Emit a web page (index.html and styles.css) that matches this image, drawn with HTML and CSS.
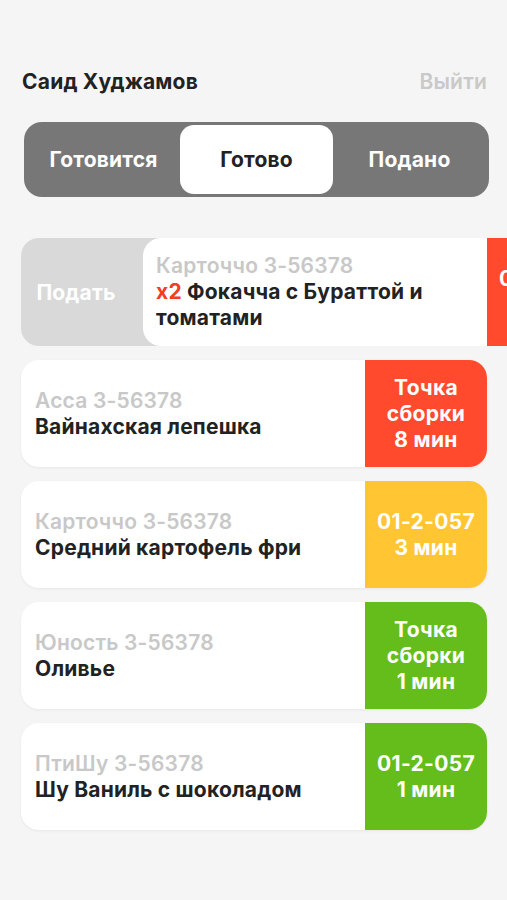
FILE: index.html
```html
<!DOCTYPE html>
<html lang="ru">
<head>
  <meta charset="UTF-8">
  <meta name="viewport" content="width=device-width, initial-scale=1.0">
  <title>Заказы</title>
  <link rel="stylesheet" href="styles.css">
</head>
<body>
  <div class="page">
    <div class="header">
      <div class="user-name">Саид Худжамов</div>
      <div class="logout">Выйти</div>
    </div>

    <div class="tabs">
      <div class="tab">Готовится</div>
      <div class="tab active">Готово</div>
      <div class="tab">Подано</div>
    </div>

    <div class="orders">
      <div class="swipe">
        <div class="swipe-action">Подать</div>
        <div class="order order-shifted">
          <div class="order-info">
            <div class="place">Карточчо 3-56378</div>
            <div class="dish"><span class="qty">x2</span> Фокачча с Бураттой и томатами</div>
          </div>
          <div class="status red">01-2-057<br>8 мин</div>
        </div>
      </div>

      <div class="order">
        <div class="order-info">
          <div class="place">Асса 3-56378</div>
          <div class="dish">Вайнахская лепешка</div>
        </div>
        <div class="status red">Точка<br>сборки<br>8 мин</div>
      </div>

      <div class="order">
        <div class="order-info">
          <div class="place">Карточчо 3-56378</div>
          <div class="dish">Средний картофель фри</div>
        </div>
        <div class="status yellow">01-2-057<br>3 мин</div>
      </div>

      <div class="order">
        <div class="order-info">
          <div class="place">Юность 3-56378</div>
          <div class="dish">Оливье</div>
        </div>
        <div class="status green">Точка<br>сборки<br>1 мин</div>
      </div>

      <div class="order">
        <div class="order-info">
          <div class="place">ПтиШу 3-56378</div>
          <div class="dish">Шу Ваниль с шоколадом</div>
        </div>
        <div class="status green">01-2-057<br>1 мин</div>
      </div>
    </div>
  </div>
</body>
</html>
```

FILE: styles.css
```css
body {
  font-family: Inter, "Noto Sans", sans-serif;
  background-color: #f5f5f5;
  margin: 0;
  padding: 0;
  overflow-x: hidden;
}

.page {
  padding: 69px 20px 40px 21px;
}

.header {
  display: flex;
  justify-content: space-between;
  align-items: center;
  padding: 0 0 0 1px;
  height: 24px;
}

.user-name {
  font-size: 21px;
  font-weight: 700;
  color: #222;
  letter-spacing: 0.2px;
}

.logout {
  font-size: 21px;
  font-weight: 600;
  color: #c9c9c9;
  letter-spacing: 0.2px;
}

.tabs {
  display: grid;
  grid-template-columns: 1fr 1fr 1fr;
  margin: 29px -2px 0 3px;
  padding: 3px;
  height: 69px;
  background-color: #777;
  border-radius: 18px;
}

.tab {
  display: flex;
  align-items: center;
  justify-content: center;
  font-size: 21px;
  font-weight: 700;
  color: #fff;
  border-radius: 14px;
  letter-spacing: 0.2px;
}

.tab.active {
  background-color: #fff;
  color: #222;
}

.orders {
  display: flex;
  flex-direction: column;
  gap: 14px;
  margin-top: 41px;
}

.order {
  display: flex;
  height: 107px;
  background-color: #fff;
  border-radius: 18px;
  overflow: hidden;
  box-shadow: 0 1px 3px rgba(0, 0, 0, 0.06);
}

.order-info {
  flex: 1;
  display: flex;
  flex-direction: column;
  justify-content: center;
  padding: 0 14px;
  font-size: 21px;
  line-height: 26px;
  letter-spacing: 0.2px;
}

.place {
  font-weight: 600;
  color: #c8c8c8;
}

.dish {
  font-weight: 700;
  color: #222;
}

.qty {
  color: #f23e22;
}

.status {
  width: 122px;
  flex-shrink: 0;
  display: flex;
  align-items: center;
  justify-content: center;
  text-align: center;
  font-size: 21px;
  font-weight: 700;
  line-height: 26px;
  letter-spacing: 0.3px;
  color: #fff;
}

.red { background-color: #ff4a2e; }
.yellow { background-color: #ffc532; }
.green { background-color: #64bd1b; }

.swipe {
  display: flex;
  height: 108px;
  background-color: #d9d9d9;
  border-radius: 18px 0 0 18px;
  margin-right: -20px;
  overflow: hidden;
}

.swipe-action {
  width: 122px;
  flex-shrink: 0;
  display: flex;
  align-items: center;
  justify-content: center;
  font-size: 21px;
  font-weight: 700;
  color: #fff;
  padding-right: 12px;
  box-sizing: border-box;
  letter-spacing: 0.2px;
}

.order-shifted {
  flex-shrink: 0;
  width: 466px;
  height: 108px;
  box-shadow: none;
}

.order-shifted .order-info {
  padding-left: 13px;
}
```
